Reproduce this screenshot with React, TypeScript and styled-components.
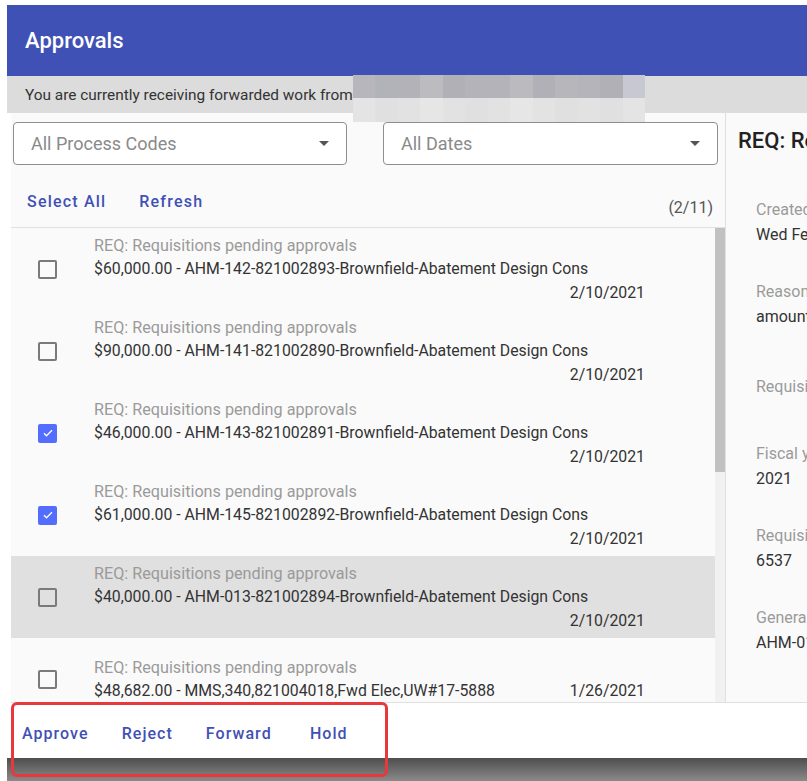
import styled, { createGlobalStyle } from 'styled-components';

const GlobalStyle = createGlobalStyle`
  html, body {
    margin: 0;
    padding: 0;
    background: #ffffff;
    overflow: hidden;
  }
  body {
    font-family: Roboto, 'Liberation Sans', Arial, sans-serif;
    -webkit-font-smoothing: antialiased;
  }
  * {
    box-sizing: border-box;
  }
`;

const colors = {
  primary: '#3f51b5',
  accent: '#536dfe',
  paper: '#fafafa',
  divider: '#e0e0e0',
  text: '#333333',
  muted: '#9a9a9a',
};

type Item = {
  amount: string;
  ref: string;
  date: string;
  checked?: boolean;
  active?: boolean;
  inline?: boolean;
};

const items: Item[] = [
  { amount: '$60,000.00', ref: 'AHM-142-821002893-Brownfield-Abatement Design Cons', date: '2/10/2021' },
  { amount: '$90,000.00', ref: 'AHM-141-821002890-Brownfield-Abatement Design Cons', date: '2/10/2021' },
  { amount: '$46,000.00', ref: 'AHM-143-821002891-Brownfield-Abatement Design Cons', date: '2/10/2021', checked: true },
  { amount: '$61,000.00', ref: 'AHM-145-821002892-Brownfield-Abatement Design Cons', date: '2/10/2021', checked: true },
  { amount: '$40,000.00', ref: 'AHM-013-821002894-Brownfield-Abatement Design Cons', date: '2/10/2021', active: true },
  { amount: '$48,682.00', ref: 'MMS,340,821004018,Fwd Elec,UW#17-5888', date: '1/26/2021', inline: true },
  { amount: '$12,500.00', ref: 'AHM-139-821002871-Brownfield-Abatement Design Cons', date: '1/22/2021' },
];

const details = [
  { label: 'Created', value: 'Wed Feb 10 2021 09:14:22', space: 32 },
  { label: 'Reason', value: 'amount exceeds department threshold', space: 45 },
  { label: 'Requisitioner', value: '', space: 17 },
  { label: 'Fiscal year', value: '2021', space: 32 },
  { label: 'Requisition number', value: '6537', space: 32 },
  { label: 'General description', value: 'AHM-013-821002894-Brownfield-Abatement Design Cons', space: 32 },
];

// pixelated redaction block over the forwarding user's name
const mosaicTop = ['#b6b6bc', '#b2b2b9', '#b2b2b8', '#bcbcc0', '#b0b0b6', '#b3b3b9', '#b3b3b9', '#bbbbbf', '#b0b0b6', '#b6b6bb', '#b4b4ba', '#b0b0b6', '#c8c8d2'];
const mosaicBottom = ['#e4e4e4', '#e0e0e0', '#e2e2e2', '#e6e6e6', '#e2e2e2', '#e0e0e0', '#e2e2e2', '#e6e6e6', '#e3e3e3', '#e0e0e0', '#e2e2e2', '#e0e0e0', '#e4e4e4'];

const Checkmark = () => (
  <svg width="12" height="12" viewBox="0 0 24 24">
    <path d="M4 12.5l5 5L20 6.5" fill="none" stroke="#ffffff" strokeWidth="2.6" />
  </svg>
);

const Caret = () => (
  <svg width="10" height="5" viewBox="0 0 10 5">
    <path d="M0 0h10L5 5z" fill="#555555" />
  </svg>
);

export default function App() {
  return (
    <>
      <GlobalStyle />
      <Page>
        <AppBar>
          <AppTitle>Approvals</AppTitle>
        </AppBar>
        <Notice>You are currently receiving forwarded work from</Notice>
        <Main>
          <ListPane>
            <Filters>
              <SelectBox>
                <Placeholder>All Process Codes</Placeholder>
                <Caret />
              </SelectBox>
              <SelectBox>
                <Placeholder>All Dates</Placeholder>
                <Caret />
              </SelectBox>
            </Filters>
            <Toolbar>
              <TextButton>Select All</TextButton>
              <TextButton>Refresh</TextButton>
              <Count>(2/11)</Count>
            </Toolbar>
            <ListArea>
              <List>
                {items.map((item) => (
                  <Row key={item.ref} $active={item.active}>
                    <Check $checked={item.checked}>{item.checked && <Checkmark />}</Check>
                    <RowText>
                      <RowTitle>REQ: Requisitions pending approvals</RowTitle>
                      <RowBody>
                        <RowLine>
                          {item.amount} - {item.ref}
                        </RowLine>
                        <RowDate $stacked={!item.inline}>{item.date}</RowDate>
                      </RowBody>
                    </RowText>
                  </Row>
                ))}
              </List>
              <ScrollTrack>
                <ScrollThumb />
              </ScrollTrack>
            </ListArea>
          </ListPane>
          <DetailPane>
            <DetailTitle>REQ: Requisitions pending approvals</DetailTitle>
            <Fields>
              {details.map((d) => (
                <Field key={d.label} $space={d.space}>
                  <FieldLabel>{d.label}</FieldLabel>
                  <FieldValue>{d.value || '\u00a0'}</FieldValue>
                </Field>
              ))}
            </Fields>
          </DetailPane>
        </Main>
        <ActionBar>
          <ActionButton>Approve</ActionButton>
          <ActionButton>Reject</ActionButton>
          <ActionButton>Forward</ActionButton>
          <ActionButton>Hold</ActionButton>
        </ActionBar>
        <Shade />
        <Mosaic>
          {mosaicTop.map((c, i) => (
            <Cell key={'t' + i} $color={c} />
          ))}
          {mosaicBottom.map((c, i) => (
            <Cell key={'b' + i} $color={c} />
          ))}
        </Mosaic>
        <Callout />
      </Page>
    </>
  );
}

const Page = styled.div`
  position: relative;
  width: 807px;
  height: 781px;
  padding: 5px 0 0 7px;
  overflow: hidden;
  display: flex;
  flex-direction: column;
`;

const AppBar = styled.header`
  height: 71px;
  flex-shrink: 0;
  display: flex;
  align-items: center;
  padding: 0 18px;
  background-color: ${colors.primary};
`;

const AppTitle = styled.h1`
  margin: 0;
  font-size: 22px;
  font-weight: 500;
  color: #ffffff;
`;

const Notice = styled.div`
  height: 37px;
  flex-shrink: 0;
  display: flex;
  align-items: center;
  padding: 0 18px;
  background-color: #dcdcdc;
  color: ${colors.text};
  font-size: 15.4px;
`;

const Main = styled.main`
  height: 589px;
  flex-shrink: 0;
  display: flex;
  padding-left: 4px;
  background: #ffffff;
`;

const ListPane = styled.section`
  width: 715px;
  flex-shrink: 0;
  display: flex;
  flex-direction: column;
  padding-top: 9px;
  background-color: ${colors.paper};
  border-right: 1px solid ${colors.divider};
`;

const Filters = styled.div`
  display: grid;
  grid-template-columns: 334px 335px;
  gap: 36px;
  padding-left: 2px;
`;

const SelectBox = styled.div`
  height: 43px;
  display: flex;
  align-items: center;
  justify-content: space-between;
  padding: 0 17px 0 17px;
  border: 1px solid #8e8e8e;
  border-radius: 4px;
  background: #ffffff;
`;

const Placeholder = styled.span`
  font-size: 18px;
  color: #8a8a8a;
`;

const Toolbar = styled.div`
  height: 62px;
  display: flex;
  align-items: flex-end;
  gap: 17px;
  padding: 0 12px 8px 8px;
`;

const TextButton = styled.button`
  height: 36px;
  min-width: 64px;
  padding: 0 8px;
  border: none;
  background: transparent;
  font-family: inherit;
  font-size: 16px;
  font-weight: 500;
  letter-spacing: 1.2px;
  color: ${colors.primary};
  cursor: pointer;
`;

const ActionButton = styled(TextButton)`
  letter-spacing: 1.05px;
`;

const Count = styled.span`
  margin-left: auto;
  margin-bottom: 1px;
  line-height: 20px;
  font-size: 16px;
  color: #555555;
`;

const ListArea = styled.div`
  flex: 1;
  min-height: 0;
  display: flex;
  border-top: 1px solid ${colors.divider};
`;

const List = styled.ul`
  flex: 1;
  margin: 0;
  padding: 0;
  list-style: none;
  overflow: hidden;
`;

const Row = styled.li<{ $active?: boolean }>`
  min-height: 82px;
  display: flex;
  align-items: center;
  gap: 37px;
  padding: 0 70px 0 27px;
  background-color: ${(p) => (p.$active ? '#e0e0e0' : 'transparent')};
`;

const Check = styled.span<{ $checked?: boolean }>`
  width: 19px;
  height: 19px;
  flex-shrink: 0;
  display: flex;
  align-items: center;
  justify-content: center;
  border-radius: 2px;
  border: ${(p) => (p.$checked ? 'none' : '2px solid #7a7a7a')};
  background-color: ${(p) => (p.$checked ? colors.accent : 'transparent')};
`;

const RowText = styled.div`
  flex: 1;
  min-width: 0;
  font-size: 15.8px;
  line-height: 23.5px;
`;

const RowTitle = styled.div`
  font-size: 16.2px;
  color: ${colors.muted};
`;

const RowBody = styled.div`
  display: flex;
  flex-wrap: wrap;
  color: ${colors.text};
`;

const RowLine = styled.span`
  white-space: nowrap;
`;

const RowDate = styled.span<{ $stacked: boolean }>`
  margin-left: auto;
  text-align: right;
  flex-basis: ${(p) => (p.$stacked ? '100%' : 'auto')};
`;

const ScrollTrack = styled.div`
  width: 10px;
  flex-shrink: 0;
  background-color: #f1f1f1;
`;

const ScrollThumb = styled.div`
  height: 244px;
  background-color: #c1c1c1;
`;

const DetailPane = styled.aside`
  flex: 1;
  min-width: 0;
  overflow: hidden;
  white-space: nowrap;
  background-color: ${colors.paper};
  padding: 16px 0 0 12px;
`;

const DetailTitle = styled.h2`
  margin: 0;
  font-size: 22px;
  line-height: 24px;
  font-weight: 500;
  color: #212121;
`;

const Fields = styled.div`
  margin-top: 45px;
  padding-left: 18px;
`;

const Field = styled.div<{ $space: number }>`
  margin-bottom: ${(p) => p.$space}px;
  font-size: 16px;
`;

const FieldLabel = styled.div`
  line-height: 24px;
  color: ${colors.muted};
`;

const FieldValue = styled.div`
  line-height: 26px;
  color: ${colors.text};
`;

const ActionBar = styled.footer`
  height: 56px;
  flex-shrink: 0;
  display: flex;
  align-items: center;
  gap: 17px;
  padding: 6px 0 0 3px;
  margin-left: 4px;
  background: #ffffff;
  border-top: 1px solid ${colors.divider};
`;

const Shade = styled.div`
  flex: 1;
  background: linear-gradient(#4e4e4e, #8a8a8a);
`;

const Mosaic = styled.div`
  position: absolute;
  left: 353px;
  top: 75px;
  width: 292px;
  height: 47px;
  display: grid;
  grid-template-columns: repeat(13, 1fr);
  grid-template-rows: 23px 24px;
`;

const Cell = styled.span<{ $color: string }>`
  background-color: ${(p) => p.$color};
`;

const Callout = styled.div`
  position: absolute;
  left: 11px;
  top: 702px;
  width: 377px;
  height: 75px;
  border: 3px solid #e8383d;
  border-radius: 6px;
  pointer-events: none;
`;
